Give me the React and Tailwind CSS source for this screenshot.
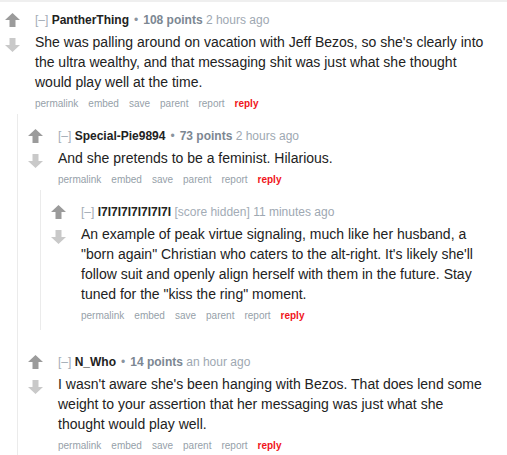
import React from 'react';

// vote arrows, drawn as simple arrow shapes
function Arrow({ down = false, className = '' }) {
    return (
        <svg width="15" height="14" viewBox="0 0 15 14" className={className}>
            <path
                d="M7.5 0 L15 7 L10.5 7 L10.5 14 L4.5 14 L4.5 7 L0 7 Z"
                fill="currentColor"
                transform={down ? 'rotate(180 7.5 7)' : undefined}
            />
        </svg>
    );
}

const actions = ['permalink', 'embed', 'save', 'parent', 'report'];

function Comment({ author, score, time, hidden = false, children, replies, className = '' }) {
    return (
        <div className={className}>
            <div className="flex">
                <div className="w-[15px] flex-shrink-0 flex flex-col items-center pt-[3px]">
                    <Arrow className="text-[#9b9b9b]" />
                    <Arrow down className="text-[#c9c9c9] mt-[11px]" />
                </div>
                <div className="ml-[15px] flex-1 min-w-0">
                    <div className="text-[12px] leading-[20px] whitespace-nowrap">
                        <span className="text-[#a3acb6]">[–]</span>{' '}
                        <span className="font-bold text-[#222]">{author}</span>
                        {hidden ? (
                            <>
                                {' '}<span className="text-[#a3acb6]">[score hidden]</span>
                            </>
                        ) : (
                            <>
                                <span className="text-[#8a949e] mx-[5px]">•</span>
                                <span className="font-bold text-[#7c8792]">{score}</span>
                            </>
                        )}{' '}
                        <span className="text-[#9ea8b2]">{time}</span>
                    </div>
                    <p className="mt-[2px] text-[14px] leading-[20px] text-[#222]">{children}</p>
                    <ul className="mt-[2px] flex gap-[10px] text-[10px] leading-[20px]">
                        {actions.map((a) => (
                            <li key={a} className="text-[#969fa9]">{a}</li>
                        ))}
                        <li className="font-bold text-[#f0151b]">reply</li>
                    </ul>
                </div>
            </div>
            {replies && (
                <div className="ml-[12px] pt-[12px] border-l border-[#ebebeb] pl-[10px]">
                    {replies}
                </div>
            )}
        </div>
    );
}

export default function App() {
    return (
        <div className="w-[507px] h-[455px] overflow-hidden bg-white border-t-2 border-[#efefef] pt-[8px] pl-[5px] pr-[19px] font-['Liberation_Sans',Arial,sans-serif]">
            <Comment
                author="PantherThing"
                score="108 points"
                time="2 hours ago"
                replies={
                    <>
                        <Comment
                            author="Special-Pie9894"
                            score="73 points"
                            time="2 hours ago"
                            replies={
                                <div className="pb-[4px]">
                                    <Comment author="I7I7I7I7I7I7I7I" hidden time="11 minutes ago">
                                        An example of peak virtue signaling, much like her husband, a "born again" Christian who caters to the alt-right. It's likely she'll follow suit and openly align herself with them in the future. Stay tuned for the "kiss the ring" moment.
                                    </Comment>
                                </div>
                            }
                        >
                            And she pretends to be a feminist. Hilarious.
                        </Comment>
                        <Comment author="N_Who" score="14 points" time="an hour ago" className="mt-[22px]">
                            I wasn't aware she's been hanging with Bezos. That does lend some weight to your assertion that her messaging was just what she thought would play well.
                        </Comment>
                    </>
                }
            >
                She was palling around on vacation with Jeff Bezos, so she's clearly into the ultra wealthy, and that messaging shit was just what she thought would play well at the time.
            </Comment>
        </div>
    );
}
